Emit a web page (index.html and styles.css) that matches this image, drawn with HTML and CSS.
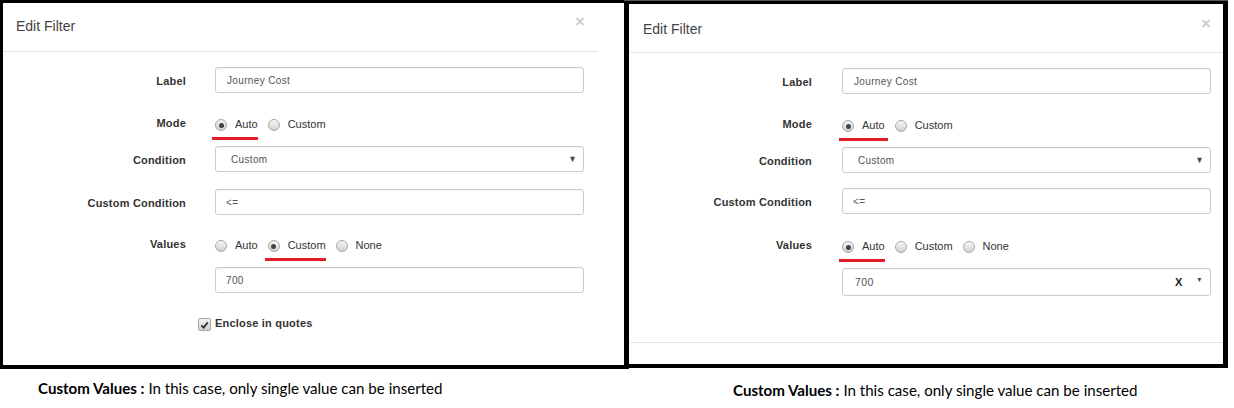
FILE: index.html
```html
<!DOCTYPE html>
<html>
<head>
<meta charset="utf-8">
<link rel="stylesheet" href="styles.css">
</head>
<body>
<div class="shots">
  <div class="col col-1">
    <div class="frame frame-1">
      <div class="modal">
        <div class="modal-header">
          <span class="title">Edit Filter</span>
          <span class="close">×</span>
        </div>
        <div class="modal-body">
          <div class="row r1">
            <div class="lbl">Label</div>
            <div class="ctl"><div class="input">Journey Cost</div></div>
          </div>
          <div class="row r2">
            <div class="lbl">Mode</div>
            <div class="ctl radios">
              <span class="opt marked"><span class="radio checked"></span>Auto</span>
              <span class="opt"><span class="radio"></span>Custom</span>
            </div>
          </div>
          <div class="row r3">
            <div class="lbl">Condition</div>
            <div class="ctl"><div class="input select">Custom<span class="caret">▼</span></div></div>
          </div>
          <div class="row r4">
            <div class="lbl">Custom Condition</div>
            <div class="ctl"><div class="input pad10">&lt;=</div></div>
          </div>
          <div class="row r5">
            <div class="lbl">Values</div>
            <div class="ctl radios">
              <span class="opt"><span class="radio"></span>Auto</span>
              <span class="opt marked"><span class="radio checked"></span>Custom</span>
              <span class="opt"><span class="radio"></span>None</span>
            </div>
          </div>
          <div class="row r6">
            <div class="lbl"></div>
            <div class="ctl"><div class="input pad10">700</div></div>
          </div>
          <div class="row r7">
            <div class="lbl chk-col"><span class="checkbox"><svg viewBox="0 0 12 12" width="12" height="12"><path d="M2.6 6.4 L5 8.8 L9.6 3.2" fill="none" stroke="#333" stroke-width="2"/></svg></span></div>
            <div class="ctl chk-text">Enclose in quotes</div>
          </div>
        </div>
      </div>
    </div>
    <p class="caption cap-1"><b>Custom Values :</b> In this case, only single value can be inserted</p>
  </div>
  <div class="col col-2">
    <div class="frame frame-2">
      <div class="modal">
        <div class="modal-header">
          <span class="title">Edit Filter</span>
          <span class="close">×</span>
        </div>
        <div class="modal-body">
          <div class="row r1">
            <div class="lbl">Label</div>
            <div class="ctl"><div class="input">Journey Cost</div></div>
          </div>
          <div class="row r2">
            <div class="lbl">Mode</div>
            <div class="ctl radios">
              <span class="opt marked"><span class="radio checked"></span>Auto</span>
              <span class="opt"><span class="radio"></span>Custom</span>
            </div>
          </div>
          <div class="row r3">
            <div class="lbl">Condition</div>
            <div class="ctl"><div class="input select">Custom<span class="caret">▼</span></div></div>
          </div>
          <div class="row r4">
            <div class="lbl">Custom Condition</div>
            <div class="ctl"><div class="input pad10">&lt;=</div></div>
          </div>
          <div class="row r5">
            <div class="lbl">Values</div>
            <div class="ctl radios">
              <span class="opt marked"><span class="radio checked"></span>Auto</span>
              <span class="opt"><span class="radio"></span>Custom</span>
              <span class="opt"><span class="radio"></span>None</span>
            </div>
          </div>
          <div class="row r6">
            <div class="lbl"></div>
            <div class="ctl"><div class="input chosen">700<span class="clear">X</span><span class="caret small">▼</span></div></div>
          </div>
        </div>
        <div class="modal-footer"></div>
      </div>
    </div>
    <p class="caption cap-2"><b>Custom Values :</b> In this case, only single value can be inserted</p>
  </div>
</div>
</body>
</html>
```

FILE: styles.css
```css
* { box-sizing: border-box; }
html, body { margin: 0; padding: 0; background: #fff; }
body {
  width: 1234px;
  height: 408px;
  overflow: hidden;
  font-family: "Liberation Sans", Arial, Helvetica, sans-serif;
  color: #333;
}
.shots { display: flex; align-items: flex-start; }
.col { display: flex; flex-direction: column; }
.frame {
  background: #fff;
  border: solid #000;
  overflow: hidden;
}
.frame-1 {
  width: 629px;
  height: 369px;
  border-width: 3px 4px 4px 3px;
}
.frame-2 {
  width: 604px;
  height: 367px;
  margin-top: 1px;
  margin-left: -5px;
  border-width: 3px 5px 4px 5px;
  box-shadow: 0 -1px 0 #555;
}
.modal { width: 595px; display: flex; flex-direction: column; }
.frame-2 .modal { width: 594px; height: 100%; }
.modal-header {
  height: 49px;
  border-bottom: 1px solid #e5e5e5;
  display: flex;
  align-items: center;
  justify-content: space-between;
  padding: 0 13px 2px 13px;
}
.frame-2 .modal-header { padding: 2px 12px 0 14px; }
.title { font-size: 14px; color: #444; }
.close {
  font-size: 17px;
  font-weight: bold;
  color: #000;
  opacity: 0.2;
  margin-top: -10px;
  line-height: 1;
}
.frame-2 .close { margin-top: -12px; }
.modal-body { display: flex; flex-direction: column; padding-bottom: 0; }
.row { display: flex; align-items: center; }
.lbl {
  width: 183px;
  flex: none;
  text-align: right;
  font-weight: bold;
  font-size: 11px;
  letter-spacing: 0.2px;
  color: #333;
}
.ctl { margin-left: 29px; width: 369px; display: flex; align-items: center; }
.r1 { margin-top: 15px; height: 26px; }
.r2 { margin-top: 21px; height: 20px; }
.r3 { margin-top: 12px; height: 26px; }
.r4 { margin-top: 17px; height: 26px; }
.r5 { margin-top: 20px; height: 20px; }
.r6 { margin-top: 12px; height: 26px; }
.r7 { margin-top: 20px; height: 20px; }
.frame-2 .ctl { margin-left: 30px; }
.frame-2 .r4 { margin-top: 15px; }
.frame-2 .r5 { margin-top: 22px; }
.frame-2 .r6 { height: 28px; }
.r1 .lbl, .r3 .lbl, .r4 .lbl { padding-top: 2px; }
.r2 .lbl, .r5 .lbl { padding-bottom: 2px; }
.input {
  width: 100%;
  height: 26px;
  border: 1px solid #ccc;
  border-radius: 3px;
  display: flex;
  align-items: center;
  padding-left: 11px;
  font-size: 10px;
  letter-spacing: 0.35px;
  color: #555;
  box-shadow: inset 0 1px 1px rgba(0,0,0,0.04);
}
.pad10 { padding-left: 10px; }
.select { padding-left: 15px; position: relative; }
.caret {
  margin-left: auto;
  margin-right: 6px;
  font-size: 9px;
  color: #444;
  transform: scaleX(0.9);
}
.chosen { height: 28px; padding-left: 12px; font-size: 10.5px; }
.clear {
  margin-left: auto;
  font-weight: bold;
  font-size: 11px;
  color: #222;
  margin-right: 13px;
}
.caret.small { font-size: 7px; margin-left: 0; margin-right: 7px; margin-top: -5px; }
.radios { gap: 0; }
.opt {
  position: relative;
  display: inline-flex;
  align-items: center;
  font-size: 11px;
  color: #333;
  margin-right: 10px;
}
.opt .radio { margin-right: 8px; }
.opt.marked::after {
  content: "";
  position: absolute;
  left: -3px;
  right: 0;
  bottom: -9px;
  height: 3px;
  background: #e81c27;
}
.frame-2 .r2 .opt.marked::after { right: -3px; }
.radio {
  width: 12px;
  height: 12px;
  border-radius: 50%;
  border: 1px solid #a8a8a8;
  background: linear-gradient(#f6f6f6, #d2d2d2);
  display: inline-flex;
  align-items: center;
  justify-content: center;
  margin-top: 2px;
}
.radio.checked::before {
  content: "";
  width: 5px;
  height: 5px;
  border-radius: 50%;
  background: #444;
}
.chk-col { display: flex; justify-content: flex-end; padding-right: 0; }
.checkbox {
  width: 13px;
  height: 13px;
  border: 1px solid #a8a8a8;
  border-radius: 2px;
  background: linear-gradient(#f2f2f2, #d0d0d0);
  display: inline-flex;
  align-items: center;
  justify-content: center;
  margin-right: -25px;
  margin-top: 3px;
}
.chk-text { font-weight: bold; font-size: 11px; letter-spacing: 0.2px; }
.modal-footer { flex: 1; border-top: 1px solid #e5e5e5; margin-top: 46px; }
.caption {
  margin: 0;
  font-family: Lato, "Open Sans", sans-serif;
  font-size: 15.1px;
  line-height: 16px;
  color: #000;
  white-space: nowrap;
}
.caption b { font-weight: 700; }
.cap-1 { margin-top: 11px; padding-left: 38px; }
.cap-2 { margin-top: 14px; padding-left: 104px; }
```
